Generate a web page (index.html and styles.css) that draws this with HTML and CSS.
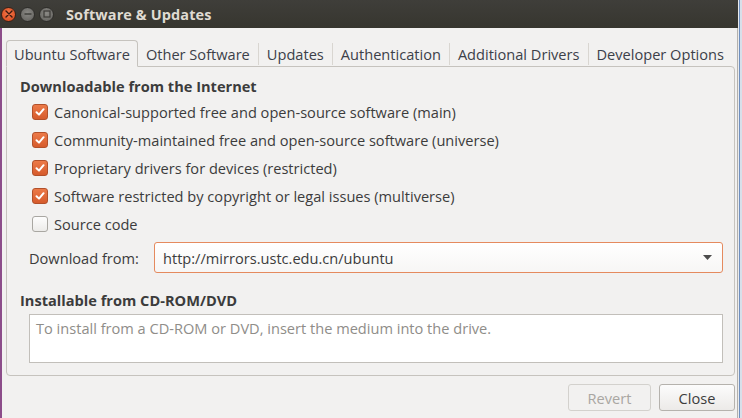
FILE: index.html
```html
<!DOCTYPE html>
<html>
<head>
<meta charset="utf-8">
<link rel="stylesheet" href="styles.css">
</head>
<body>
<div class="screen">
  <div class="window">
    <div class="titlebar">
      <div class="wbtns">
        <span class="wb wb-close"><svg width="8" height="8" viewBox="0 0 8 8"><path d="M1 1L7 7M7 1L1 7" stroke="#3a1a10" stroke-width="1.4" stroke-linecap="round"/></svg></span>
        <span class="wb"><svg width="8" height="8" viewBox="0 0 8 8"><path d="M0.5 4H7.5" stroke="#3c3b37" stroke-width="1.4"/></svg></span>
        <span class="wb"><svg width="8" height="8" viewBox="0 0 8 8"><rect x="1" y="1" width="6" height="6" fill="none" stroke="#3c3b37" stroke-width="1.2"/></svg></span>
      </div>
      <div class="title">Software &amp; Updates</div>
    </div>
    <div class="main">
      <div class="tabs">
        <div class="tab active">Ubuntu Software</div>
        <div class="tab">Other Software</div>
        <div class="tab">Updates</div>
        <div class="tab">Authentication</div>
        <div class="tab">Additional Drivers</div>
        <div class="tab last">Developer Options</div>
      </div>
      <div class="frame">
        <div class="heading">Downloadable from the Internet</div>
        <div class="checks">
          <div class="check"><span class="box on"><svg width="12" height="12" viewBox="0 0 12 12"><path d="M2.5 6.2L5 8.6L9.6 3.2" fill="none" stroke="#fff" stroke-width="2" stroke-linecap="round" stroke-linejoin="round"/></svg></span>Canonical-supported free and open-source software (main)</div>
          <div class="check"><span class="box on"><svg width="12" height="12" viewBox="0 0 12 12"><path d="M2.5 6.2L5 8.6L9.6 3.2" fill="none" stroke="#fff" stroke-width="2" stroke-linecap="round" stroke-linejoin="round"/></svg></span>Community-maintained free and open-source software (universe)</div>
          <div class="check"><span class="box on"><svg width="12" height="12" viewBox="0 0 12 12"><path d="M2.5 6.2L5 8.6L9.6 3.2" fill="none" stroke="#fff" stroke-width="2" stroke-linecap="round" stroke-linejoin="round"/></svg></span>Proprietary drivers for devices (restricted)</div>
          <div class="check"><span class="box on"><svg width="12" height="12" viewBox="0 0 12 12"><path d="M2.5 6.2L5 8.6L9.6 3.2" fill="none" stroke="#fff" stroke-width="2" stroke-linecap="round" stroke-linejoin="round"/></svg></span>Software restricted by copyright or legal issues (multiverse)</div>
          <div class="check"><span class="box"></span>Source code</div>
        </div>
        <div class="dl-row">
          <span class="dl-label">Download from:</span>
          <div class="combo">
            <span>http://mirrors.ustc.edu.cn/ubuntu</span>
            <svg width="9" height="5" viewBox="0 0 9 5"><path d="M0 0H9L4.5 5Z" fill="#4c4c4c"/></svg>
          </div>
        </div>
        <div class="heading heading-cd">Installable from CD-ROM/DVD</div>
        <div class="cdbox">To install from a CD-ROM or DVD, insert the medium into the drive.</div>
      </div>
      <div class="buttons">
        <button class="btn btn-disabled">Revert</button>
        <button class="btn btn-close">Close</button>
      </div>
    </div>
  </div>
  <div class="edge"></div>
</div>
</body>
</html>
```
FILE: styles.css
```css
* { box-sizing: border-box; }
html, body { margin: 0; padding: 0; }
body {
  width: 742px;
  height: 418px;
  overflow: hidden;
  background: #f2f1f0;
  font-family: "Open Sans", "Noto Sans", sans-serif;
  font-size: 14.6px;
  color: #3c3c3c;
}
.screen {
  display: flex;
  width: 742px;
  height: 418px;
}
.window {
  width: 738px;
  display: flex;
  flex-direction: column;
}
.edge {
  width: 4px;
  background: linear-gradient(to right, #e9ebee 0, #e9ebee 1px, #6f8fbf 1px, #6f8fbf 2px, #d8e0ea 2px);
}
.titlebar {
  height: 28px;
  background: linear-gradient(#3f3e3a, #37362f);
  display: flex;
  align-items: center;
}
.wbtns {
  display: flex;
  gap: 4px;
  padding-left: 1px;
  width: 66px;
}
.wb {
  width: 15px;
  height: 15px;
  border-radius: 50%;
  background: radial-gradient(circle at 50% 40%, #8a8985, #5f5e5a);
  border: 1px solid #2e2d2a;
  display: flex;
  align-items: center;
  justify-content: center;
}
.wb-close {
  background: radial-gradient(circle at 50% 40%, #f3784a, #d6461a);
  border-color: #3a2016;
}
.title {
  color: #dfdbd2;
  font-weight: bold;
  font-size: 14.5px;
  letter-spacing: 0.1px;
}
.main {
  flex: 1;
  border-left: 2px solid #8c4d8a;
  border-right: 1px solid #b3b1ad;
  padding: 12px 2px 0 4px;
  display: flex;
  flex-direction: column;
}
.tabs {
  display: flex;
  height: 27px;
  margin-bottom: -1px;
  position: relative;
  z-index: 1;
}
.tab {
  padding: 0 8px;
  display: flex;
  align-items: center;
  color: #3c4049;
  border-right: 1px solid #d9d6d1;
  margin: 3px 0 2px;
  white-space: nowrap;
}
.tab.last { border-right: none; }
.tab.active {
  margin: 0;
  padding: 1px 7px 0 7px;
  border: 1px solid #c6c3be;
  border-bottom-color: #f2f1f0;
  border-radius: 4px 4px 0 0;
  background: #f2f1f0;
}
.frame {
  border: 1px solid #c6c3be;
  border-radius: 0 4px 4px 4px;
  height: 310px;
  padding: 9px 11px 0 13px;
}
.heading {
  font-weight: bold;
  line-height: 20px;
  height: 20px;
  margin-bottom: 2px;
}
.checks { display: flex; flex-direction: column; }
.check {
  height: 28px;
  display: flex;
  align-items: center;
  padding-left: 12px;
  gap: 6px;
}
.box {
  width: 16px;
  height: 16px;
  border-radius: 3px;
  border: 1px solid #a9a7a2;
  background: linear-gradient(#fdfdfd, #ecebe9);
  display: flex;
  align-items: center;
  justify-content: center;
}
.box.on {
  border-color: #b2502a;
  background: linear-gradient(#ec7a48, #d65b2c);
}
.dl-row {
  display: flex;
  align-items: center;
  margin-top: 4px;
  padding-left: 9px;
}
.dl-label { width: 125px; }
.combo {
  flex: 1;
  height: 31px;
  border: 1px solid #e58a5e;
  border-radius: 3px;
  background: linear-gradient(#ffffff, #f7f6f5);
  display: flex;
  align-items: center;
  justify-content: space-between;
  padding: 0 10px 0 8px;
}
.heading-cd { margin-top: 17px; margin-bottom: 4px; }
.cdbox {
  margin-left: 9px;
  height: 49px;
  border: 1px solid #c2bfba;
  background: #fff;
  color: #8f8d89;
  padding: 4px 6px;
  line-height: 18px;
}
.buttons {
  display: flex;
  justify-content: flex-end;
  gap: 8px;
  margin-top: 8px;
}
.btn {
  font-family: inherit;
  font-size: 14.6px;
  height: 27px;
  border-radius: 3px;
  padding: 0;
}
.btn-disabled {
  width: 83px;
  border: 1px solid #d3d1cd;
  background: #f2f1f0;
  color: #a9a6a2;
}
.btn-close {
  width: 76px;
  border: 1px solid #b5b2ad;
  background: linear-gradient(#fcfcfc, #eceae8);
  color: #3c3c3c;
}
```
